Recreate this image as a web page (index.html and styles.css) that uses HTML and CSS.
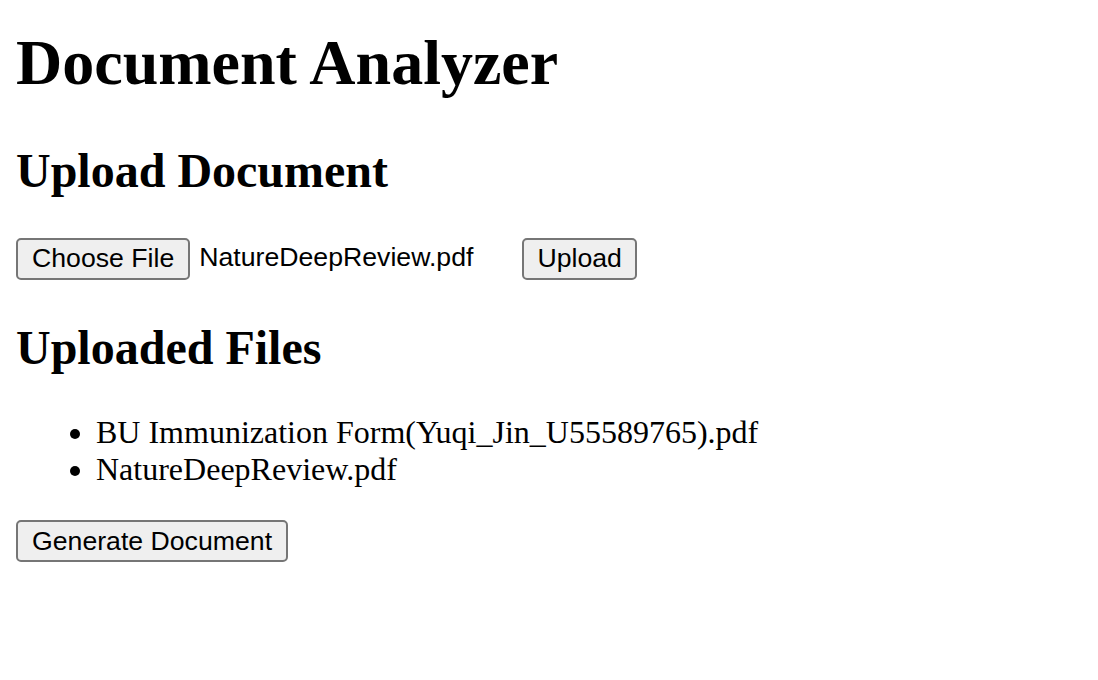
FILE: index.html
```html
<!DOCTYPE html>
<html>
<head>
<meta charset="utf-8">
<title>Document Analyzer</title>
<link rel="stylesheet" href="styles.css">
</head>
<body>
<h1 class="title">Document Analyzer</h1>
<h2 class="section">Upload Document</h2>
<div class="upload-row">
  <span class="file-input"><button class="btn" type="button">Choose File</button><span class="file-name">NatureDeepReview.pdf</span></span>
  <button class="btn btn-upload" type="button">Upload</button>
</div>
<h2 class="section">Uploaded Files</h2>
<ul class="files">
  <li>BU Immunization Form(Yuqi_Jin_U55589765).pdf</li>
  <li>NatureDeepReview.pdf</li>
</ul>
<button class="btn" type="button">Generate Document</button>
</body>
</html>
```

FILE: styles.css
```css
html, body {
  background: #ffffff;
}
body {
  margin: 0 16px;
  font-family: "Liberation Serif", "Times New Roman", serif;
  color: #000;
}
.title {
  font-size: 64px;
  font-weight: bold;
  margin: 26px 0 42.88px;
}
.section {
  font-size: 48px;
  font-weight: bold;
  margin: 39.84px 0;
}
.upload-row {
  font-family: "Liberation Sans", Arial, sans-serif;
  font-size: 26.67px;
}
.file-input {
  display: inline-block;
  width: 499px;
  white-space: nowrap;
}
.file-name {
  margin-left: 9px;
  font-family: "Liberation Sans", Arial, sans-serif;
  font-size: 26.67px;
}
.btn {
  font-family: "Liberation Sans", Arial, sans-serif;
  font-size: 26.67px;
  color: #000;
  background: #efefef;
  border: 2px solid #767676;
  border-radius: 5px;
  padding: 2px 14px;
  height: 42px;
  line-height: 1;
  vertical-align: middle;
}
.btn-upload {
  padding: 2px 13px;
}
.files {
  font-size: 32px;
  margin: 32px 0;
  padding-left: 80px;
}
```
